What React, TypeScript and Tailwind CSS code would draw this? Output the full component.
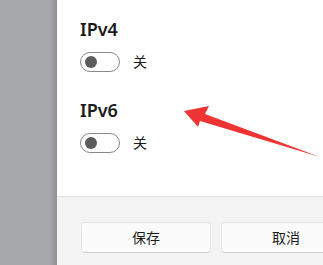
import React from "react";

function Toggle() {
  return (
    <div className="flex items-center h-5 gap-[13px]">
      <span className="w-10 h-5 rounded-full border border-[#8a8a8a] bg-white flex items-center pl-[4px]">
        <span className="w-3 h-3 rounded-full bg-[#5c5c5c]" />
      </span>
      <span className="text-[14px] leading-5 text-[#1b1b1b]">关</span>
    </div>
  );
}

export default function App() {
  return (
    <div
      className="relative w-[323px] h-[265px] flex overflow-hidden bg-white"
      style={{ fontFamily: '"Noto Sans", "Noto Sans CJK SC", sans-serif' }}
    >
      {/* dimmed background on the left */}
      <div className="w-[57px] shrink-0 flex bg-[#a6a8ab]">
        <div className="flex-1" />
        <div className="w-[7px] bg-gradient-to-r from-transparent to-[#8e9093]" />
      </div>

      {/* dialog */}
      <div className="flex-1 flex flex-col">
        <div className="h-[197px] pl-[23px] pt-[17px] flex flex-col border-b border-[#e3e3e3]">
          <div className="text-[18px] leading-6 font-semibold text-[#1a1a1a]">IPv4</div>
          <div className="mt-[11px]">
            <Toggle />
          </div>
          <div className="mt-[26px] text-[18px] leading-6 font-semibold text-[#1a1a1a]">IPv6</div>
          <div className="mt-[11px]">
            <Toggle />
          </div>
        </div>
        <div className="flex-1 bg-[#f3f3f3] pl-[24px] pt-[25px] flex gap-[10px]">
          <button className="w-[130px] h-[31px] shrink-0 rounded-[4px] bg-[#fbfbfb] border border-[#e5e5e5] border-b-[#d0d0d0] text-[14px] text-[#1b1b1b]">
            保存
          </button>
          <button className="w-[130px] h-[31px] shrink-0 rounded-[4px] bg-[#fbfbfb] border border-[#e5e5e5] border-b-[#d0d0d0] text-[14px] text-[#1b1b1b]">
            取消
          </button>
        </div>
      </div>

      {/* red annotation arrow */}
      <svg className="absolute left-0 top-0" width="323" height="265" viewBox="0 0 323 265">
        <polygon
          points="184,111 209,106 205,114 320,157 200,121 198,127"
          fill="#ef3434"
        />
      </svg>
    </div>
  );
}
